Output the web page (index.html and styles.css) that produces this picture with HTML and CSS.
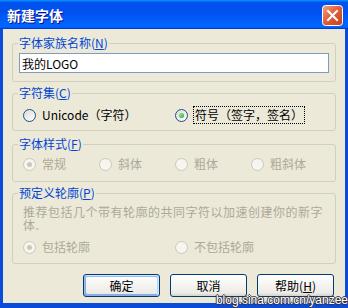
FILE: index.html
```html
<!DOCTYPE html>
<html lang="zh-CN">
<head>
	<meta charset="UTF-8">
	<title>新建字体</title>
	<link rel="stylesheet" href="styles.css">
</head>
<body>
	<div class="window">
		<div class="titlebar">
			<span class="title">新建字体</span>
			<span class="close">
				<svg width="21" height="21" viewBox="0 0 21 21">
					<defs>
						<linearGradient id="cg" x1="0" y1="0" x2="1" y2="1">
							<stop offset="0" stop-color="#f0a48c"/>
							<stop offset="0.45" stop-color="#e2613d"/>
							<stop offset="1" stop-color="#c1401c"/>
						</linearGradient>
					</defs>
					<rect x="0.5" y="0.5" width="20" height="20" rx="3" fill="url(#cg)" stroke="#fff"/>
					<path d="M6 6 L15 15 M15 6 L6 15" stroke="#fff" stroke-width="2" stroke-linecap="square"/>
				</svg>
			</span>
		</div>
		<div class="client">
			<!-- 字体家族名称 -->
			<fieldset class="group g1">
				<legend>字体家族名称(<u>N</u>)</legend>
				<div class="body">
					<input class="textbox" type="text" value="我的LOGO">
				</div>
			</fieldset>
			<!-- 字符集 -->
			<fieldset class="group g2">
				<legend>字符集(<u>C</u>)</legend>
				<div class="body options">
					<label class="opt wide"><span class="radio"></span>Unicode（字符）</label>
					<label class="opt wide"><span class="radio on"></span><span class="focus">符号（签字，签名）</span></label>
				</div>
			</fieldset>
			<!-- 字体样式 -->
			<fieldset class="group g3">
				<legend>字体样式(<u>F</u>)</legend>
				<div class="body options off">
					<label class="opt"><span class="radio on"></span>常规</label>
					<label class="opt"><span class="radio"></span>斜体</label>
					<label class="opt"><span class="radio"></span>粗体</label>
					<label class="opt"><span class="radio"></span>粗斜体</label>
				</div>
			</fieldset>
			<!-- 预定义轮廓 -->
			<fieldset class="group g4">
				<legend>预定义轮廓(<u>P</u>)</legend>
				<div class="body off">
					<p class="desc">推荐包括几个带有轮廓的共同字符以加速创建你的新字<br>体.</p>
					<div class="options">
						<label class="opt wide"><span class="radio on"></span>包括轮廓</label>
						<label class="opt wide"><span class="radio"></span>不包括轮廓</label>
					</div>
				</div>
			</fieldset>
			<div class="buttons">
				<button class="btn default">确定</button>
				<button class="btn">取消</button>
				<button class="btn">帮助(<u>H</u>)</button>
			</div>
		</div>
		<div class="watermark">blog.sina.com.cn/yanzee</div>
	</div>
</body>
</html>
```

FILE: styles.css
```css
body{
	margin: 0;
	font-family: "Noto Sans CJK SC", "Liberation Sans", sans-serif;
	font-size: 12px;
	color: #000;
}
.window{
	position: relative;
	width: 348px;
	height: 308px;
	display: flex;
	flex-direction: column;
	overflow: hidden;
}
/* 标题栏 */
.titlebar{
	height: 29px;
	flex: none;
	display: flex;
	align-items: center;
	justify-content: space-between;
	padding: 0 5px 0 7px;
	background: linear-gradient(180deg, #0997ff, #0053ee 8%, #0050ee 40%, #06f 88%, #06f 93%, #005bff 95%, #003dd7 96%, #003dd7);
}
.title{
	color: #fff;
	font-size: 14px;
	font-weight: bold;
	line-height: 16px;
	text-shadow: 1px 1px #0f1089;
}
.close{
	display: flex;
	margin-top: 1px;
}
/* 客户区 */
.client{
	flex: 1;
	background: #ece9d8;
	border: 3px solid #0b4bda;
	border-top: 0;
	border-bottom-width: 5px;
	padding: 7px 9px 0 9px;
}
.group{
	margin: 0;
	padding: 0;
	border: 1px solid #d0d0bf;
	border-radius: 3px;
	min-width: 0;
}
.group legend{
	margin-left: 5px;
	padding: 0 1px;
	line-height: 14px;
	color: #0046d5;
}
.g1 .body{
	padding: 3px 6px 8px 6px;
}
.g2{
	margin-top: 4px;
}
.g2 .body{
	padding: 7px 10px 7px 10px;
}
.g3{
	margin-top: 6px;
}
.g3 .body{
	padding: 5px 10px 9px 10px;
}
.g4{
	margin-top: 4px;
}
.g4 .body{
	padding: 5px 10px 8px 10px;
}
.textbox{
	display: block;
	box-sizing: border-box;
	width: 100%;
	height: 20px;
	margin: 0;
	padding: 0 2px;
	border: 1px solid #7f9db9;
	background: #fff;
	font: inherit;
	line-height: 18px;
	color: #000;
	outline: none;
}
.options{
	display: grid;
	grid-template-columns: repeat(4, 76px);
}
.opt{
	display: flex;
	align-items: center;
	gap: 6px;
	height: 16px;
	line-height: 16px;
	white-space: nowrap;
}
.opt.wide{
	grid-column: span 2;
}
.radio{
	width: 13px;
	height: 13px;
	box-sizing: border-box;
	flex: none;
	border: 1px solid #1c5180;
	border-radius: 50%;
	background: linear-gradient(135deg, #dcdcd7, #fff);
	display: flex;
	align-items: center;
	justify-content: center;
}
.radio.on::after{
	content: "";
	width: 5px;
	height: 5px;
	border-radius: 50%;
	background: radial-gradient(circle at 35% 35%, #8ee88c, #21a121);
}
.focus{
	outline: 1px dotted #000;
	outline-offset: 0;
	padding: 0 1px;
}
/* 禁用状态 */
.off{
	color: #aca899;
}
.off .radio{
	border-color: #cac8bb;
	background: #f6f5ef;
}
.off .radio.on::after{
	background: #cac8bb;
}
.desc{
	margin: 0 0 8px 0;
	line-height: 13px;
	letter-spacing: 0.5px;
	white-space: nowrap;
}
/* 按钮 */
.buttons{
	display: flex;
	justify-content: flex-end;
	gap: 10px;
	margin-top: 10px;
	padding-right: 2px;
}
.btn{
	width: 77px;
	height: 23px;
	margin: 0;
	padding: 0;
	border: 1px solid #003c74;
	border-radius: 3px;
	background: linear-gradient(180deg, #fff, #ecebe6 86%, #d6d0c5);
	font: inherit;
	line-height: 14px;
	color: #000;
}
.btn.default{
	box-shadow: inset -1px 1px #cee7ff, inset 1px 2px #98b8ea, inset -2px 2px #bcd4f6, inset 1px -1px #89ade4, inset 2px -2px #89ade4;
}
/* 水印 */
.watermark{
	position: absolute;
	right: 0;
	bottom: 2px;
	font-family: "Liberation Sans", sans-serif;
	font-size: 12px;
	line-height: 11px;
	color: #fff;
	text-shadow: 1px 0 #334, -1px 0 #334, 0 1px #334, 0 -1px #334;
}
```
